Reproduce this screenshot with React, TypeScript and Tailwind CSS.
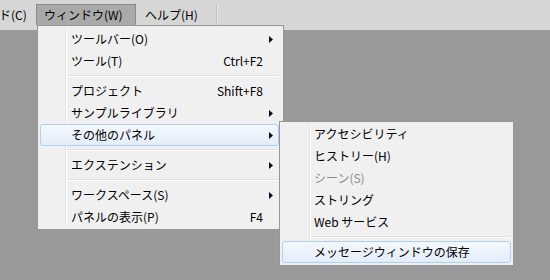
const font = { fontFamily: '"Noto Sans CJK JP", "Noto Sans", sans-serif' };

type Item =
  | { kind: 'item'; label: string; shortcut?: string; sub?: boolean; active?: boolean; disabled?: boolean }
  | { kind: 'sep' };

const mainItems: Item[] = [
  { kind: 'item', label: 'ツールバー(O)', sub: true },
  { kind: 'item', label: 'ツール(T)', shortcut: 'Ctrl+F2' },
  { kind: 'sep' },
  { kind: 'item', label: 'プロジェクト', shortcut: 'Shift+F8' },
  { kind: 'item', label: 'サンプルライブラリ', sub: true },
  { kind: 'item', label: 'その他のパネル', sub: true, active: true },
  { kind: 'sep' },
  { kind: 'item', label: 'エクステンション', sub: true },
  { kind: 'sep' },
  { kind: 'item', label: 'ワークスペース(S)', sub: true },
  { kind: 'item', label: 'パネルの表示(P)', shortcut: 'F4' },
];

const subItems: Item[] = [
  { kind: 'item', label: 'アクセシビリティ' },
  { kind: 'item', label: 'ヒストリー(H)' },
  { kind: 'item', label: 'シーン(S)', disabled: true },
  { kind: 'item', label: 'ストリング' },
  { kind: 'item', label: 'Web サービス' },
  { kind: 'sep' },
  { kind: 'item', label: 'メッセージウィンドウの保存', active: true },
];

function Arrow() {
  return (
    <svg width="4" height="7" viewBox="0 0 4 7">
      <path d="M0 0 L4 3.5 L0 7 Z" fill="#0a0a1e" />
    </svg>
  );
}

function MenuRow({ item, pad, gutter }: { item: Item; pad: number; gutter: number }) {
  if (item.kind === 'sep') {
    return (
      <div className="h-[8px] flex flex-col justify-center" style={{ paddingLeft: gutter }}>
        <div className="h-px bg-[#e0e0e0]" />
        <div className="h-px bg-white" />
      </div>
    );
  }
  return (
    <div
      className={
        'relative z-10 h-[22px] flex items-center text-[12px] rounded-[3px] border ' +
        (item.active
          ? 'border-[#aed0f4] bg-gradient-to-b from-[#f3f8fd] to-[#e3edf9]'
          : 'border-transparent')
      }
      style={{ paddingLeft: pad - 1 }}
    >
      <span className={'flex-1 ' + (item.disabled ? 'text-[#8d8d8d]' : 'text-black')}>{item.label}</span>
      {item.shortcut && <span className="text-black">{item.shortcut}</span>}
      <div className="w-[15px] pl-[6px] flex items-center">{item.sub && <Arrow />}</div>
    </div>
  );
}

export default function App() {
  return (
    <div className="relative w-[550px] h-[280px] overflow-hidden bg-[#9a9a9a]" style={font}>
      {/* menu bar */}
      <div className="h-[30px] bg-[#d6d6d6] flex items-start pt-[4px] text-[12px] text-black">
        <div className="w-[37px] h-[21px] flex items-center -ml-[1px]">ド(C)</div>
        <div className="w-[100px] h-[21px] flex items-center pl-[7px] bg-[#a9a9a9] border border-b-0 border-[#8a8a8a]">
          ウィンドウ(W)
        </div>
        <div className="w-[80px] h-[21px] flex items-center pl-[9px]">ヘルプ(H)</div>
        <div className="w-px h-[21px] bg-[#c2c2c2]" />
        <div className="w-px h-[21px] bg-[#e6e6e6]" />
      </div>

      {/* dropdown */}
      <div className="absolute left-[37px] top-[25px] w-[247px] h-[205px] bg-[#f0f0f0] border border-[#979797] pt-[2px] pl-[2px] pr-[4px]">
        <div className="absolute left-[27px] top-[2px] bottom-[2px] w-px bg-[#e2e3e3]" />
        <div className="absolute left-[28px] top-[2px] bottom-[2px] w-px bg-white" />
        {mainItems.map((it, i) => (
          <MenuRow key={i} item={it} pad={31} gutter={25} />
        ))}
      </div>

      {/* submenu */}
      <div className="absolute left-[279px] top-[121px] w-[235px] h-[145px] bg-[#f0f0f0] border border-[#979797] pt-[1px] px-[2px]">
        <div className="absolute left-[29px] top-[2px] bottom-[2px] w-px bg-[#e2e3e3]" />
        <div className="absolute left-[30px] top-[2px] bottom-[2px] w-px bg-white" />
        {subItems.map((it, i) => (
          <MenuRow key={i} item={it} pad={32} gutter={27} />
        ))}
      </div>
    </div>
  );
}
